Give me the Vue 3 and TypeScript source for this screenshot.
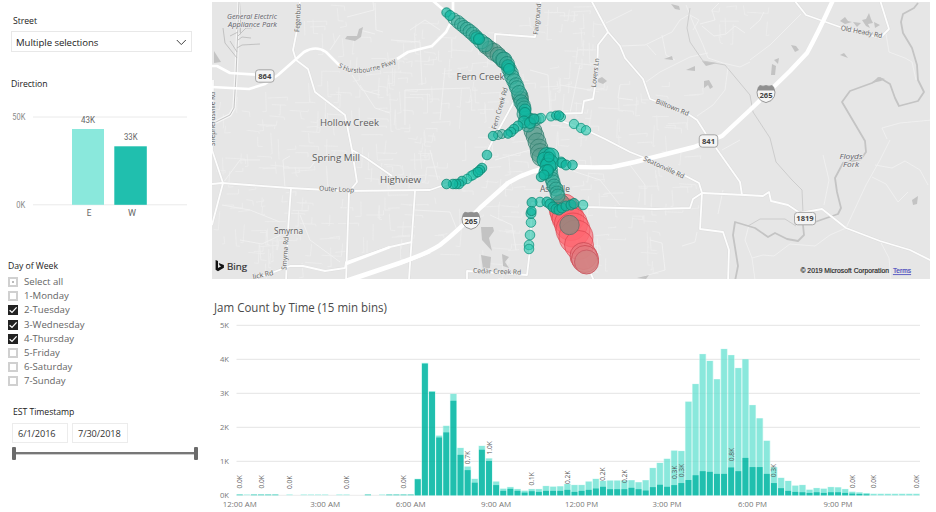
<script setup lang="ts">
type Pt = [number, number]
interface MapLabel { text: string; x: number; y: number; w: number; size: number; rot?: number; italic?: boolean }
interface Bubble { x: number; y: number; r: number; kind: string }

const days: { name: string; state: 'partial' | 'on' | 'off' }[] = [
  { name: 'Select all', state: 'partial' },
  { name: '1-Monday', state: 'off' },
  { name: '2-Tuesday', state: 'on' },
  { name: '3-Wednesday', state: 'on' },
  { name: '4-Thursday', state: 'on' },
  { name: '5-Friday', state: 'off' },
  { name: '6-Saturday', state: 'off' },
  { name: '7-Sunday', state: 'off' },
]

/* ---------- histogram ---------- */
const pitch = 7.123
const cx = (i: number): number => 239.7 + i * pitch
const base = 495.3
const K = 34
// [bin, total, west], thousands
const bins: [number, number, number][] = [
  [25, 0.48, 0.47], [26, 3.89, 3.87], [27, 3.06, 3.04], [28, 1.75, 1.7], [29, 2.04, 1.85], [30, 2.98, 2.78],
  [31, 1.39, 1.19], [32, 0.84, 0.74], [33, 0.48, 0.37], [34, 1.45, 1.34], [35, 1.08, 1.01], [36, 0.4, 0.3],
  [37, 0.19, 0.13], [38, 0.24, 0.19], [39, 0.18, 0.13], [40, 0.13, 0.08], [41, 0.18, 0.12], [42, 0.18, 0.1],
  [43, 0.27, 0.13], [44, 0.25, 0.13], [45, 0.26, 0.13], [46, 0.33, 0.16], [47, 0.3, 0.1], [48, 0.3, 0.13],
  [49, 0.4, 0.16], [50, 0.48, 0.2], [51, 0.42, 0.25], [52, 0.43, 0.18], [53, 0.43, 0.18], [54, 0.43, 0.18],
  [55, 0.44, 0.22], [56, 0.38, 0.18], [57, 0.44, 0.14], [58, 0.8, 0.24], [59, 0.95, 0.31], [60, 1.07, 0.25],
  [61, 1.31, 0.3], [62, 1.3, 0.36], [63, 2.75, 0.45], [64, 3.27, 0.59], [65, 4.15, 0.71], [66, 3.95, 0.69],
  [67, 3.41, 0.63], [68, 4.3, 0.63], [69, 4.12, 0.82], [70, 3.74, 0.71], [71, 4.0, 1.1], [72, 2.65, 0.83],
  [73, 2.26, 0.83], [74, 1.6, 0.63], [75, 0.82, 0.36], [76, 0.51, 0.21], [77, 0.42, 0.13], [78, 0.28, 0.1],
  [79, 0.3, 0.09], [80, 0.16, 0.07], [81, 0.21, 0.09], [82, 0.19, 0.07], [83, 0.24, 0.09], [84, 0.23, 0.09],
  [85, 0.18, 0.07], [86, 0.1, 0.05], [87, 0.08, 0.04], [88, 0.06, 0.03],
  [89, 0.04, 0], [90, 0.04, 0], [91, 0.04, 0], [92, 0.04, 0], [93, 0.04, 0], [94, 0.04, 0], [95, 0.04, 0],
]
const nightPale = [1, 7, 9, 10, 11, 12, 14, 15, 20]
const nightMid = [0, 2, 3, 4, 5, 18, 21, 22, 23, 24]
const barLabels: [number, string, number][] = [
  [0, '0.0K', 488.5], [3, '0.0K', 488.5], [7, '0.0K', 489], [15, '0.0K', 489], [23, '0.0K', 488.5],
  [32, '0.7K', 464.3], [35, '1.0K', 454.5], [41, '0.1K', 485.5], [46, '0.2K', 484], [51, '0.2K', 480.8],
  [54, '0.2K', 483], [61, '0.3K', 479], [62, '0.3K', 477.3], [69, '0.8K', 461.3], [75, '0.3K', 477.3],
  [86, '0.0K', 488.3], [89, '0.0K', 488.3], [95, '0.0K', 488.3],
]
const hours: [number, string, number][] = [
  [0, '12:00 AM', 34], [12, '3:00 AM', 30], [24, '6:00 AM', 30], [36, '9:00 AM', 30],
  [48, '12:00 PM', 33], [60, '3:00 PM', 29], [72, '6:00 PM', 29], [84, '9:00 PM', 29],
]

/* ---------- map ---------- */
const highway = 'M345 281 390 266 Q425 255 440 245 Q458 231 480 208 L508 183 Q530 169 560 166 Q585 168 612 167 L635 162 694 147 722 136 750 110 790 71 807 53 Q818 33 833 0'
const majors = [
  'M212 87 249 89 265 84 278 75 295 60 304 52 Q316 45 326 52 L340 66',
  'M212 66 217 66 230 73 264 75',
  'M397 59 408 52 432 46 446 32 453 18 453 0',
  'M432 0 446 12',
  'M350 281 400 264 430 252 M390 247 346 264',
]
const roads = [
  'M300 0 297 30 293 50 296 60 308 69 315 92 345 115 350 140 352 150 357 182 349 192 346 281',
  'M352 150 366 158 392 176',
  'M212 184 222 183 290 188 345 191 430 190 447 184 470 177 483 165 488 150 495 136 520 125 550 117 586 130 605 139 630 152 645 158 680 173 699 183 702 193 693 199 690 208 655 209 585 207 532 203 530 250 527 275 467 271 467 281',
  'M213 80 212 150 223 183 212 225',
  'M291 188 288 230 286 281',
  'M250 281 290 266 303 266 325 271 345 268 346 262 390 247 412 242',
  'M415 191 409 279',
  'M702 193 745 195 763 196 769 192 771 201 788 205 800 213 822 209 846 228 880 241 910 250 932 261',
  'M716 148 740 182 742 195',
  'M702 193 700 229 723 232 729 250 728 281',
  'M591 0 608 32 620 46 625 58 643 79 650 99 685 112 697 120 706 134',
  'M608 32 598 45 597 75 593 99 584 101 582 113 550 114',
  'M495 53 495 34 535 37 541 0',
  'M794 0 806 15 840 27 880 38 889 29 880 0',
  'M446 12 508 66 530 125 545 160 560 200 594 281',
  'M493 140 515 100 520 86',
]
const rivers = [
  'M918 3 914 8 903 14 901 22 903 33 912 48 917 65 918 80 924 92 918 101 899 106 895 98 890 84 880 78 872 83 850 91 842 102 865 141 866 152 861 159 843 163 835 178 837 192 841 208 838 214 815 222',
  'M803 225 804 235 798 241 787 239 775 233 768 237 755 228 735 222 733 235 738 266 735 281',
]
const creeks = [
  'M690 8 687 28 690 42 703 61 725 65 750 95 753 112 770 138 776 162 792 180 802 190 803 213',
  'M748 226 760 219 785 219 796 226',
]
const lanes = [
  'M606 23 632 10 M620 46 645 45 672 32 680 20 690 14 M686 5 694 25 703 45 708 58 723 63 740 67 750 62 M646 82 660 72 690 57 708 53',
  'M647 45 656 55 M662 35 666 55 675 60 M693 30 699 20 690 15 M700 24 715 20 712 10 719 3 M702 26 714 36 726 34 735 26 745 33 M728 67 725 90 713 105 697 116',
  'M750 60 770 45 788 27 801 14 M750 29 760 20 764 12 M886 34 889 52 905 58 912 62 916 80 M932 120 900 123 882 128 887 139',
  'M890 140 880 160 866 185 846 228 M875 165 892 168 905 161 920 170 928 185 M872 177 886 184 898 202 908 192 M823 155 829 180 824 205',
  'M846 228 830 235 815 246 790 244 774 256 763 255 752 258 745 240 749 225 M752 258 755 280 M880 241 889 258 891 281 M723 190 718 214 M722 150 740 140',
  'M570 170 600 180 620 205 M630 165 645 185 645 205 M650 240 662 243 665 270 645 276 M682 246 695 242 697 232',
  'M347 17 374 10 373 2 M375 3 376 30 383 32 M360 30 375 34 M330 50 340 35 M352 75 362 90 380 95 M360 85 375 108 390 113',
  'M285 188 283 160 290 156 M283 168 310 168 320 155 M223 183 240 160 260 160 M222 205 250 210 280 222 M240 240 262 244 287 232 M300 215 310 240 340 262',
  'M391 40 420 42 422 85 M410 30 425 20 440 30 M405 125 405 90 470 88 M440 120 445 68 M560 85 590 90 600 75 M620 85 618 98 633 100',
  'M430 150 438 180 M415 210 450 212 457 230 M495 160 530 150 545 145 M550 110 548 75 530 70 M490 215 512 225 516 250 M570 113 580 65',
]

let seed = 7
function rnd(): number {
  seed = (seed * 16807) % 2147483647
  return seed / 2147483647
}
// Residential street clusters: x, y, width, height, street count
const blocks: [number, number, number, number, number][] = [
  [216, 90, 125, 88, 55], [300, 70, 110, 50, 28], [216, 190, 70, 75, 35], [292, 195, 54, 70, 22],
  [350, 35, 45, 45, 10], [360, 120, 75, 65, 40], [360, 195, 50, 50, 20], [395, 22, 95, 95, 55],
  [425, 195, 90, 70, 24], [455, 125, 70, 70, 26], [510, 5, 80, 90, 30], [550, 75, 50, 90, 24],
  [615, 83, 75, 60, 24], [630, 150, 55, 65, 18], [570, 170, 60, 60, 16], [560, 230, 60, 40, 10],
  [300, 5, 45, 35, 10], [630, 215, 25, 55, 12], [700, 5, 70, 35, 10], [570, 5, 30, 60, 10],
]
const streets: string = blocks.map(([bx, by, bw, bh, n]) => {
  let d = ''
  for (let i = 0; i < n; i++) {
    const x = bx + rnd() * bw
    const y = by + rnd() * bh
    const a = (rnd() - 0.5) * 3
    const len = 6 + rnd() * 15
    const hook = (rnd() - 0.5) * 12
    d += rnd() > 0.5
      ? `M${x.toFixed(1)} ${y.toFixed(1)}l${len.toFixed(1)} ${a.toFixed(1)} ${(a / 2).toFixed(1)} ${hook.toFixed(1)}`
      : `M${x.toFixed(1)} ${y.toFixed(1)}l${a.toFixed(1)} ${len.toFixed(1)} ${hook.toFixed(1)} ${(a / 2).toFixed(1)}`
  }
  return d
}).join('')

const lakes = [
  '345,39 347,36 357,36 359,29 363,27 361,37 355,41', '214,51 221,62 214,63', '671,4 679,6 680,10 675,9',
  '664,59 672,56 673,60', '686,70 695,66 695,71', '704,81 709,80 713,87 710,89 708,85 704,88',
  '598,79 602,77 607,81 603,84 598,82', '702,61 717,63 706,66', '791,45 796,46 799,50 795,52',
  '774,60 779,58 778,64', '772,64 776,66 775,75 771,75', '840,55 844,53 848,58', '840,21 845,17 848,21 852,22 845,24',
  '853,22 861,23 857,27', '862,20 866,19 869,13 871,19 873,23 868,24 870,28 866,26', '874,22 880,25 875,28',
  '481,227 493,227 494,231 489,238 492,251 482,240', '481,255 491,257 490,268 483,269', '502,254 509,257 505,262 509,268 503,266',
  '912,200 918,196 917,204 913,205', '637,278 649,275 646,279', '872,83 878,77 885,79 881,81', '238,3 241,2 241,35 238,30',
]
const labels: MapLabel[] = [
  { text: 'General Electric', x: 252, y: 18.8, w: 50, size: 7, italic: true },
  { text: 'Appliance Park', x: 252.5, y: 27, w: 49, size: 7, italic: true },
  { text: 'Fern Creek', x: 480.5, y: 80.2, w: 48, size: 9.2 },
  { text: 'Hollow Creek', x: 349.5, y: 126.3, w: 59, size: 9.2 },
  { text: 'Spring Mill', x: 336, y: 160.5, w: 48, size: 9.2 },
  { text: 'Highview', x: 400.5, y: 183.3, w: 41, size: 9.2 },
  { text: 'Smyrna', x: 288.5, y: 233.5, w: 29, size: 8.6 },
  { text: 'Ashville', x: 555, y: 191.5, w: 30, size: 8.4 },
  { text: 'Floyds', x: 851, y: 158.5, w: 23, size: 7.4, italic: true },
  { text: 'Fork', x: 851, y: 167, w: 16, size: 7.4, italic: true },
  { text: 'Fegenbus', x: 300, y: 18, w: 28, size: 6.8, rot: -87 },
  { text: 'Fairground', x: 539.5, y: 19.3, w: 31, size: 6.8, rot: -84 },
  { text: 'Lovers Ln', x: 597.5, y: 73, w: 29, size: 6.8, rot: -83 },
  { text: 'Billtown Rd', x: 671.5, y: 109.5, w: 35, size: 6.8, rot: 22 },
  { text: 'Seatonville Rd', x: 663, y: 169.5, w: 44, size: 6.8, rot: 25 },
  { text: 'Old Heady Rd', x: 861, y: 34, w: 42, size: 6.8, rot: 11 },
  { text: 'Outer Loop', x: 336.5, y: 191.5, w: 35, size: 6.8, rot: 3 },
  { text: 'Smyrna Rd', x: 287.5, y: 253.5, w: 33, size: 6.8, rot: -86 },
  { text: 'Fern Creek Rd', x: 502, y: 109, w: 43, size: 6.8, rot: -74 },
  { text: 'Cedar Creek Rd', x: 497, y: 273.7, w: 48, size: 6.8, rot: 2 },
  { text: 'Shepherdsville Rd', x: 215, y: 119, w: 54, size: 6.4, rot: -90 },
  { text: 'lick Rd', x: 263.5, y: 277, w: 21, size: 6.8, rot: -12 },
]
const shields: { n: string; x: number; y: number; w: number }[] = [
  { n: '864', x: 264.8, y: 76, w: 18.5 }, { n: '841', x: 708.5, y: 141, w: 18.5 }, { n: '1819', x: 805, y: 218.6, w: 21 },
]
const interstates: Pt[] = [[471, 220.3], [766, 93.6]]

const raw: [string, string][] = [
  ['red', '564,209,15 566,214,15.5 568,218,16 571,224,16.5 573,230,17 576,237,17 579,245,14.5'],
  ['rose', '583.5,256,13.5 585,259,13.5'],
  ['last', '586.5,262,12'],
  ['brown', '561,203,8.5 569.5,225,9.7'],
  ['mix', '486,46,8 490,49,8 494,52,8.5 498,55,8 503,60,8 520,96,8 521,99,7.5 533,131,9 535,136,9 537,142,9 539,148,9 540,153,9.5 541,157,9'],
  ['mid', '454,19,6 458,22,6.5 461,24.5,6.5 464,27,6.5 467,29,6.8 470,31.5,7 473,34,7 476,37,7 481,41.5,7.5 485,44.5,7.5 500,57,7.5 504,60,8 507,64,7.5 509,69,7.3 511,73,7.3 512,77,7.3 514,81,7.3 516,85,7.3 517,88,7.3 519,93,7.5 521,102,7.2 523,105,7.2 524,108,7 524,114,7 526,118,7 530,119,6 535,120,6 528,125,7 550,170,7.5 551,175,7 552,179,7 553,182,7 554,186,7 556,189,7 557,193,7 558,196,7 539,119,5 502,134,4.5 498,135,4.5'],
  ['light', '541,118,4.7 551,116.5,4.5 561,117,4.5 574,124,4.7 581,128,4.7 586,130.3,4.7 476,173,4.7 471,176,4.7 473,175,4.7 467,179,4.7 540,202,4.8 583,205,4.8 531,222.5,4.8 530,235,4.8 529,245,4.8 529,249,4.8 561,162,5'],
  ['deep', '446.5,12.5,4.7 450,15.5,5 477,38,6.3 479,39,5.5 508,66,6.3 509,69,5.5 525,110,6 525,113,5.5 524,122,6 530,123,5.5 534,119,5 556,115.5,4.5 559,115.5,4.7 518,126,5 514,129,4.8 511,132,4.8 508,134,4.3 493,136,4.7 487,155,4.8 482,168,4.8 480,170,4.8 478,172,4.8 462,181,4.8 459,184,4.8 456,184,4.8 453,184,4.8 446.5,184,4.8 449,157,0 547,156,8.5 551,156,8 545,160,8 550,163,8.5 548,166,8 549,157,5 562,163,5 566,165,5 572.5,165,4.8 546,172,7 548,170,5.5 541,177,4.7 544,175,5 532,202.5,5 547,202,5 550,204,5 553,207,5 556,209,5 559,210,5 562,208,5 566,206,5 571,205,5 574,203.5,5 531,213.5,5 531.5,211,4.6'],
]
const bubbles: Bubble[] = raw.flatMap(([kind, list]) =>
  list.split(' ').map((s) => {
    const [x, y, r] = s.split(',').map(Number)
    return { x, y, r, kind }
  }),
)
</script>

<template>
  <div class="report">
    <aside class="side">
      <section class="street">
        <h3 class="t">Street</h3>
        <div class="dropdown">
          <span>Multiple selections</span>
          <svg width="11" height="7" viewBox="0 0 11 7"><path d="M.8 1 5.3 5.6 9.8 1" fill="none" stroke="#444" /></svg>
        </div>
      </section>

      <section class="direction">
        <h3 class="t">Direction</h3>
        <svg class="dir-chart" width="190" height="120" viewBox="10 100 190 120">
          <path d="M33 117H187M33 204.8H187" stroke="#eaeaea" />
          <rect x="72" y="129" width="32" height="75.8" fill="#8ae8dc" />
          <rect x="114.3" y="146.3" width="32.5" height="58.5" fill="#20bfae" />
          <g class="axis">
            <text x="12.3" y="119.6" textLength="13" lengthAdjust="spacingAndGlyphs">50K</text>
            <text x="16.3" y="207.7" textLength="9" lengthAdjust="spacingAndGlyphs">0K</text>
          </g>
          <g class="axis dark">
            <text x="81" y="122.8" textLength="14" lengthAdjust="spacingAndGlyphs">43K</text>
            <text x="124" y="140.2" textLength="13.5" lengthAdjust="spacingAndGlyphs">33K</text>
            <text x="86.7" y="216">E</text>
            <text x="128" y="216" textLength="8" lengthAdjust="spacingAndGlyphs">W</text>
          </g>
        </svg>
      </section>

      <section class="week">
        <h3 class="t">Day of Week</h3>
        <ul>
          <li v-for="d in days" :key="d.name">
            <span class="box" :class="d.state">
              <svg v-if="d.state === 'on'" width="10" height="10" viewBox="0 0 10 10"><path d="M1.6 5.2 4 7.4 8.6 2.4" fill="none" stroke="#fff" stroke-width="1.3" /></svg>
            </span>
            <span>{{ d.name }}</span>
          </li>
        </ul>
      </section>

      <section class="stamp">
        <h3 class="t">EST Timestamp</h3>
        <div class="dates">
          <span class="date">6/1/2016</span>
          <span class="date">7/30/2018</span>
        </div>
        <div class="slider"><i></i><b></b><i></i></div>
      </section>
    </aside>

    <main class="main">
      <svg class="map" width="718" height="277" viewBox="212 2 718 277">
        <rect x="212" y="2" width="718" height="277" fill="#e6e6e6" />
        <path :d="streets" class="minor" />
        <path v-for="(d, i) in lanes" :key="'l' + i" :d="d" class="lane" />
        <polygon v-for="(p, i) in lakes" :key="'k' + i" :points="p" fill="#c3c3c3" />
        <path v-for="(d, i) in creeks" :key="'c' + i" :d="d" class="creek" />
        <path v-for="(d, i) in rivers" :key="'v' + i" :d="d" class="river" />
        <g class="rail">
          <path d="M239 2 237 50 236 75 234 108 230 115 212 124" class="rail-bed" />
          <path d="M239 2 237 50 236 75 234 108 230 115 212 124 M237 58 225 43 223 28 M237 52 230 41 M237 48 242 45 260 44 M238 40 242 37 251 38 M238 36 246 28 252 28 M238 32 230 36" />
        </g>
        <path v-for="(d, i) in roads" :key="'rc' + i" :d="d" class="road-case" />
        <path v-for="(d, i) in roads" :key="'r' + i" :d="d" class="road" />
        <path v-for="(d, i) in majors" :key="'m' + i" :d="d" class="major" />
        <path :d="highway" class="highway" />

        <text
          v-for="l in labels" :key="l.text" class="place" :class="{ it: l.italic }"
          :x="l.x" :y="l.y" :font-size="l.size" :textLength="l.w" lengthAdjust="spacingAndGlyphs"
          :transform="l.rot ? `rotate(${l.rot} ${l.x} ${l.y})` : undefined"
        >{{ l.text }}</text>
        <path id="pkwy" d="M338 67 Q352 76 372 71 Q388 68 400 60" fill="none" />
        <text class="place start" font-size="6.8"><textPath href="#pkwy" textLength="61" lengthAdjust="spacingAndGlyphs">S Hurstbourne Pkwy</textPath></text>

        <g v-for="s in shields" :key="s.n">
          <rect :x="s.x - s.w / 2" :y="s.y - 6.2" :width="s.w" height="12.4" rx="3" fill="#f4f4f4" stroke="#a6a6a6" />
          <text class="num" :x="s.x" :y="s.y + 2.7">{{ s.n }}</text>
        </g>
        <g v-for="([x, y], i) in interstates" :key="'s' + i" :transform="`translate(${x} ${y})`">
          <path d="M-7.6-6.5Q-10-1-8.3 3-6 8 0 9 6 8 8.3 3 10-1 7.6-6.5L6-8Q3-6.8 0-8-3-6.8-6-8Z" fill="#f6f6f6" stroke="#999" />
          <path d="M-7.6-6.5-6-8Q-3-6.8 0-8 3-6.8 6-8L7.6-6.5 8.6-3.2H-8.6Z" fill="#8f8f8f" />
          <text class="num" x="0" y="3.9">265</text>
        </g>

        <circle v-for="(b, i) in bubbles" :key="'b' + i" :cx="b.x" :cy="b.y" :r="b.r" :class="b.kind" />

        <path d="M215.6 260 218 260.9V268L221.2 266.3 219.6 265.5 218.7 263.1 223.9 265V267.7L218 271.2 215.6 269.8Z" fill="#111" />
        <text x="227" y="269.8" class="bing" textLength="20" lengthAdjust="spacingAndGlyphs">Bing</text>
        <text x="800.5" y="273.3" class="copy" textLength="88.5" lengthAdjust="spacingAndGlyphs">© 2019 Microsoft Corporation</text>
        <text x="893" y="273.3" class="terms" textLength="18" lengthAdjust="spacingAndGlyphs">Terms</text>
      </svg>

      <svg class="hist" width="724" height="214" viewBox="212 298 724 214">
        <text x="214" y="312.3" class="title" textLength="173" lengthAdjust="spacingAndGlyphs">Jam Count by Time (15 min bins)</text>
        <g class="tick">
          <text v-for="n in 6" :key="n" x="229" :y="base - (n - 1) * K + 2.8" text-anchor="end" textLength="9" lengthAdjust="spacingAndGlyphs">{{ n - 1 }}K</text>
        </g>
        <path v-for="n in 6" :key="'g' + n" :d="`M236.5 ${base - (n - 1) * K}H920`" stroke="#ebebeb" />
        <g v-for="[i, total, west] in bins" :key="'h' + i">
          <rect :x="cx(i) - 3.5" :y="base - total * K - 0.3" width="7" :height="total * K + 0.3" fill="#c9f5ef" />
          <rect :x="cx(i) - 2.85" :y="base - total * K" width="5.7" :height="total * K" fill="#8ae8dc" />
          <rect :x="cx(i) - 2.95" :y="base - west * K" width="5.9" :height="west * K" fill="#20bfae" />
        </g>
        <rect v-for="i in nightPale" :key="'p' + i" :x="cx(i) - 3.1" y="494" width="6.2" height="1.4" fill="#c9f5ef" />
        <rect v-for="i in nightMid" :key="'q' + i" :x="cx(i) - 3.1" y="494" width="6.2" height="1.6" fill="#93e3d9" />
        <path v-for="n in 5" :key="'o' + n" :d="`M236.5 ${base - n * K}H920`" stroke="#000" stroke-opacity="0.03" />
        <text
          v-for="[i, t, y] in barLabels" :key="'t' + i" class="vlabel" x="0" y="0" textLength="13.4"
          lengthAdjust="spacingAndGlyphs" :transform="`translate(${cx(i) + 2.5} ${y}) rotate(-90)`"
        >{{ t }}</text>
        <g class="tick">
          <text v-for="[i, t, w] in hours" :key="t" :x="cx(i)" y="507" text-anchor="middle" :textLength="w" lengthAdjust="spacingAndGlyphs">{{ t }}</text>
        </g>
      </svg>
    </main>
  </div>
</template>

<style>
body { background: #fff; overflow: hidden; }
</style>

<style scoped>
.report { display: flex; width: 936px; height: 512px; background: #fff; font-family: "Open Sans", "Noto Sans", sans-serif; color: #333; overflow: hidden; }
.side { width: 212px; flex: none; display: flex; flex-direction: column; }
.main { flex: 1; display: flex; flex-direction: column; gap: 19px; padding-top: 2px; }
svg { display: block; flex: none; }
.t { margin: 0; font-size: 8.7px; line-height: 12px; font-weight: 400; color: #222; letter-spacing: -0.05px; }

.street { padding: 15px 0 0 11px; height: 62px; box-sizing: border-box; }
.street .t { padding-left: 2px; }
.dropdown { display: flex; align-items: center; justify-content: space-between; box-sizing: border-box; width: 181px; height: 21px; margin-top: 4px; padding: 1px 4px 0; border: 1px solid #e8e8e8; font-size: 9.6px; letter-spacing: -0.06px; color: #222; }
.direction { padding-top: 16px; height: 182px; box-sizing: border-box; }
.direction .t { padding-left: 11px; }
.dir-chart { margin: 10px 0 0 10px; }
.axis text { font-family: Roboto, sans-serif; font-size: 8.2px; fill: #8a8a8a; }
.dark text { fill: #666; }

.week { padding: 16px 0 0 8px; height: 147px; box-sizing: border-box; }
.week ul { list-style: none; margin: 3px 0 0; padding: 0; }
.week li { display: flex; align-items: center; gap: 6px; height: 14.2px; font-size: 9.6px; line-height: 14px; color: #666; }
.box { width: 10px; height: 10px; box-sizing: border-box; border: 2px solid #d0d0d0; display: flex; align-items: center; justify-content: center; background: #fff; flex: none; }
.box.on { background: #222; border: 0; }
.box.partial::after { content: ""; width: 2px; height: 2px; background: #bbb; }

.stamp { padding: 15px 0 0 12px; }
.stamp .t { padding-left: 1px; }
.dates { display: flex; gap: 4px; margin-top: 5px; }
.date { box-sizing: border-box; width: 56px; height: 20px; border: 1px solid #ececec; padding-left: 5px; font-size: 9.2px; line-height: 19px; color: #333; letter-spacing: -0.1px; }
.slider { display: flex; align-items: center; width: 186px; height: 13px; margin-top: 4px; }
.slider i { width: 4px; height: 13px; border-radius: 1px; background: #6b6b6b; }
.slider b { flex: 1; height: 2px; background: #777; border-bottom: 1px solid #ccc; }

.minor, .lane, .creek, .river, .road, .road-case, .major, .highway, .rail path { fill: none; stroke-linejoin: round; }
.minor { stroke: #eeeeee; stroke-width: 0.8; }
.lane { stroke: #f1f1f1; stroke-width: 0.9; }
.creek { stroke: #c9c9c9; stroke-width: 0.9; }
.river { stroke: #c4c4c4; stroke-width: 1.8; }
.rail path { stroke: #bdbdbd; stroke-width: 0.9; }
.rail .rail-bed { stroke: #f6f6f6; stroke-width: 3.4; }
.road-case { stroke: #dddddd; stroke-width: 2.8; }
.road { stroke: #fdfdfd; stroke-width: 1.8; }
.major { stroke: #fff; stroke-width: 2.7; }
.highway { stroke: #fff; stroke-width: 4.4; }
.place { fill: #5c5c5c; text-anchor: middle; paint-order: stroke; stroke: #ebebeb; stroke-width: 1.4px; }
.place.start { text-anchor: start; }
.it { font-style: italic; fill: #606068; }
.num { font-size: 7.6px; font-weight: 700; fill: #444; text-anchor: middle; }
circle { stroke-width: 1; }
.red { fill: rgba(255, 100, 110, 0.6); stroke: rgba(215, 65, 75, 0.65); }
.rose { fill: rgba(225, 120, 125, 0.6); stroke: rgba(205, 75, 85, 0.85); }
.last { fill: rgba(210, 130, 130, 0.85); stroke: #cc6068; }
.brown { fill: rgba(150, 135, 128, 0.88); stroke: #75706c; }
.mix { fill: rgba(85, 155, 140, 0.6); stroke: rgba(50, 125, 110, 0.75); }
.mid { fill: rgba(48, 172, 152, 0.5); stroke: rgba(24, 130, 112, 0.7); }
.light { fill: rgba(40, 200, 175, 0.62); stroke: rgba(20, 150, 130, 0.8); }
.deep { fill: rgba(16, 182, 160, 0.7); stroke: rgba(12, 135, 115, 0.8); }
.bing { font-size: 9.6px; fill: #333; stroke: #333; stroke-width: 0.2px; }
.copy, .terms { font-family: "Liberation Sans", Arial, sans-serif; font-size: 6.8px; fill: #222; stroke: #222; stroke-width: 0.15px; }
.terms { fill: #4444bb; stroke: #4444bb; text-decoration: underline; }

.title { font-size: 11.7px; fill: #4a4a4a; }
.tick text { font-size: 7.9px; fill: #777; }
.vlabel { font-size: 7px; fill: #555; }
</style>
